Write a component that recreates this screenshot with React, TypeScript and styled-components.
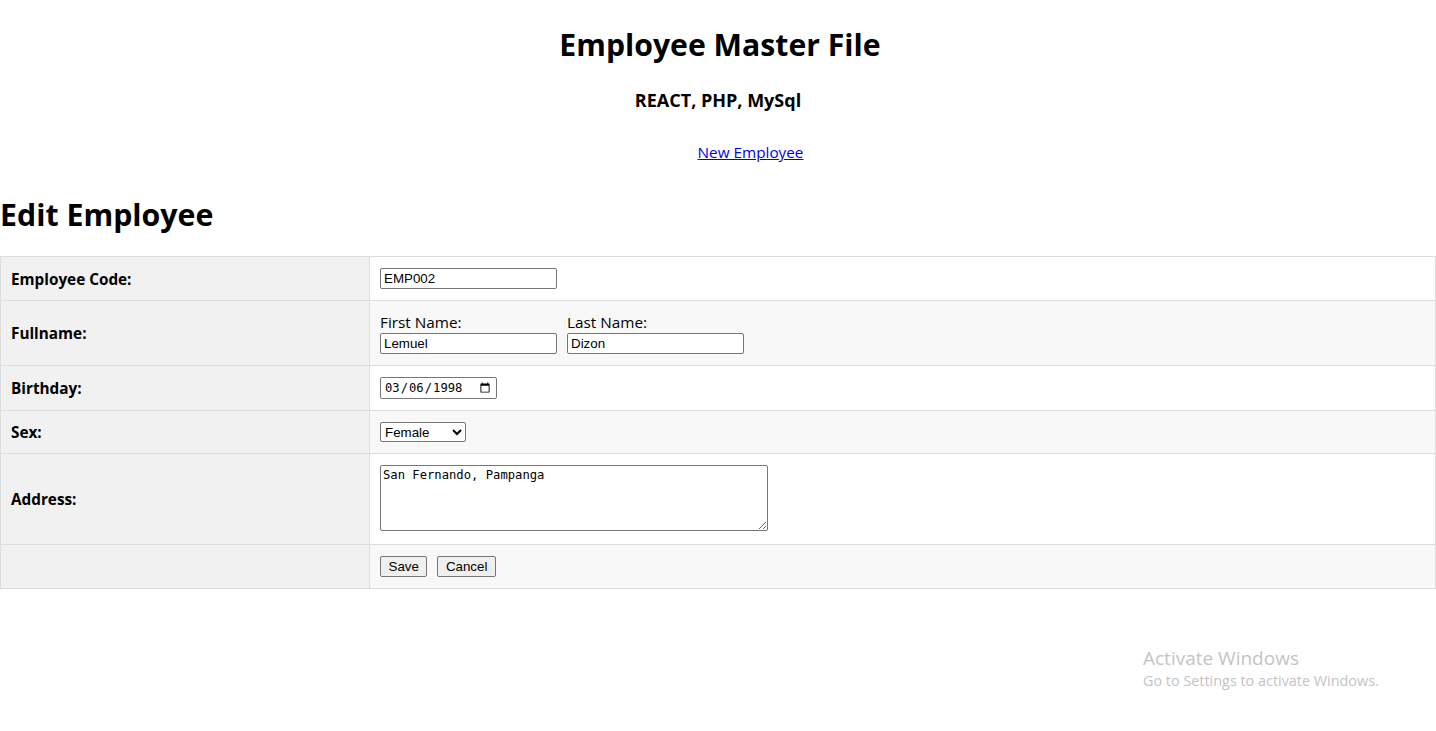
import React from "react";
import styled, { createGlobalStyle } from "styled-components";

const Global = createGlobalStyle`
  html, body { margin: 0; padding: 0; background: #fff; }
  body { font-family: "Open Sans", "Noto Sans", sans-serif; color: #000; }
`;

const Page = styled.div`
  position: relative;
  min-height: 731px;
`;

const Header = styled.header`
  text-align: center;
`;

const Title = styled.h1`
  font-size: 30.2px;
  font-weight: 700;
  margin: 0;
  padding: 23px 0 0 4px;
  line-height: 44px;
`;

const Subtitle = styled.h3`
  font-size: 18px;
  font-weight: 700;
  margin: 0;
  padding-top: 21px;
  line-height: 24px;
`;

const Nav = styled.nav`
  padding: 29px 0 0 65px;
  line-height: 22px;
  font-size: 15.3px;
`;

const NavLink = styled.a`
  color: #0000ee;
  text-decoration: underline;
`;

const SectionTitle = styled.h1`
  font-size: 30.3px;
  font-weight: 700;
  margin: 0;
  padding: 30px 0 19px 0;
  line-height: 44px;
`;

const Table = styled.table`
  width: 100%;
  border-collapse: collapse;
  font-size: 15.3px;
`;

const Row = styled.tr<{ $alt?: boolean }>`
  background: ${(p) => (p.$alt ? "#f8f8f8" : "#ffffff")};
`;

const LabelCell = styled.th`
  width: 348px;
  text-align: left;
  font-weight: 700;
  background: #f1f1f1;
  border: 1px solid #dddddd;
  padding: 11px 10px;
  line-height: 20px;
  vertical-align: middle;
`;

const ValueCell = styled.td`
  border: 1px solid #dddddd;
  padding: 11px 10px;
  vertical-align: middle;
  line-height: 20px;
`;

const TextInput = styled.input`
  display: block;
  box-sizing: border-box;
  width: 177px;
  height: 21px;
  font: 13.33px "Liberation Sans", Arial, sans-serif;
  padding: 1px 3px;
  border: 1px solid #767676;
  border-radius: 2px;
  margin: 0;
`;

const DateInput = styled.input`
  display: block;
  box-sizing: border-box;
  width: 117px;
  height: 22px;
  font: 12.2px "DejaVu Sans Mono", monospace;
  padding: 1px 3px;
  border: 1px solid #767676;
  border-radius: 2px;
  margin: 0;
`;

const Select = styled.select`
  display: block;
  box-sizing: border-box;
  width: 86px;
  height: 20px;
  font: 13.33px "Liberation Sans", Arial, sans-serif;
  border: 1px solid #767676;
  border-radius: 2px;
  background: #fff;
  margin: 0;
`;

const TextArea = styled.textarea`
  display: block;
  box-sizing: border-box;
  width: 388px;
  height: 66px;
  font: 12.2px "DejaVu Sans Mono", monospace;
  padding: 2px 2px;
  border: 1px solid #767676;
  border-radius: 2px;
  margin: 0 0 2px 0;
`;

const NameFields = styled.div`
  display: flex;
  gap: 10px;
`;

const NameField = styled.label`
  display: flex;
  flex-direction: column;
  font-size: 15.3px;
  line-height: 21px;
`;

const Buttons = styled.div`
  display: flex;
  gap: 10px;
`;

const Button = styled.button`
  box-sizing: border-box;
  height: 21px;
  font: 13.33px "Liberation Sans", Arial, sans-serif;
  padding: 0 7.5px;
  border: 1px solid #767676;
  border-radius: 2px;
  background: #efefef;
  color: #000;
`;

const Watermark = styled.div`
  position: absolute;
  left: 1143px;
  top: 646px;
  color: #c4c4c4;
  font-family: "Open Sans", sans-serif;
  pointer-events: none;
`;

const WmTitle = styled.div`
  font-size: 19px;
  line-height: 24px;
`;

const WmSub = styled.div`
  font-size: 14.4px;
  line-height: 21px;
`;

export default function App() {
  return (
    <Page>
      <Global />
      <Header>
        <Title>Employee Master File</Title>
        <Subtitle>REACT, PHP, MySql</Subtitle>
        <Nav>
          <NavLink href="#">New Employee</NavLink>
        </Nav>
      </Header>
      <SectionTitle>Edit Employee</SectionTitle>
      <Table>
        <tbody>
          <Row>
            <LabelCell>Employee Code:</LabelCell>
            <ValueCell>
              <TextInput defaultValue="EMP002" />
            </ValueCell>
          </Row>
          <Row $alt>
            <LabelCell>Fullname:</LabelCell>
            <ValueCell>
              <NameFields>
                <NameField>
                  First Name:
                  <TextInput defaultValue="Lemuel" />
                </NameField>
                <NameField>
                  Last Name:
                  <TextInput defaultValue="Dizon" />
                </NameField>
              </NameFields>
            </ValueCell>
          </Row>
          <Row>
            <LabelCell>Birthday:</LabelCell>
            <ValueCell>
              <DateInput type="date" defaultValue="1998-03-06" />
            </ValueCell>
          </Row>
          <Row $alt>
            <LabelCell>Sex:</LabelCell>
            <ValueCell>
              <Select defaultValue="Female">
                <option>Male</option>
                <option>Female</option>
              </Select>
            </ValueCell>
          </Row>
          <Row>
            <LabelCell>Address:</LabelCell>
            <ValueCell>
              <TextArea defaultValue="San Fernando, Pampanga" />
            </ValueCell>
          </Row>
          <Row $alt>
            <LabelCell />
            <ValueCell>
              <Buttons>
                <Button>Save</Button>
                <Button>Cancel</Button>
              </Buttons>
            </ValueCell>
          </Row>
        </tbody>
      </Table>
      <Watermark>
        <WmTitle>Activate Windows</WmTitle>
        <WmSub>Go to Settings to activate Windows.</WmSub>
      </Watermark>
    </Page>
  );
}
